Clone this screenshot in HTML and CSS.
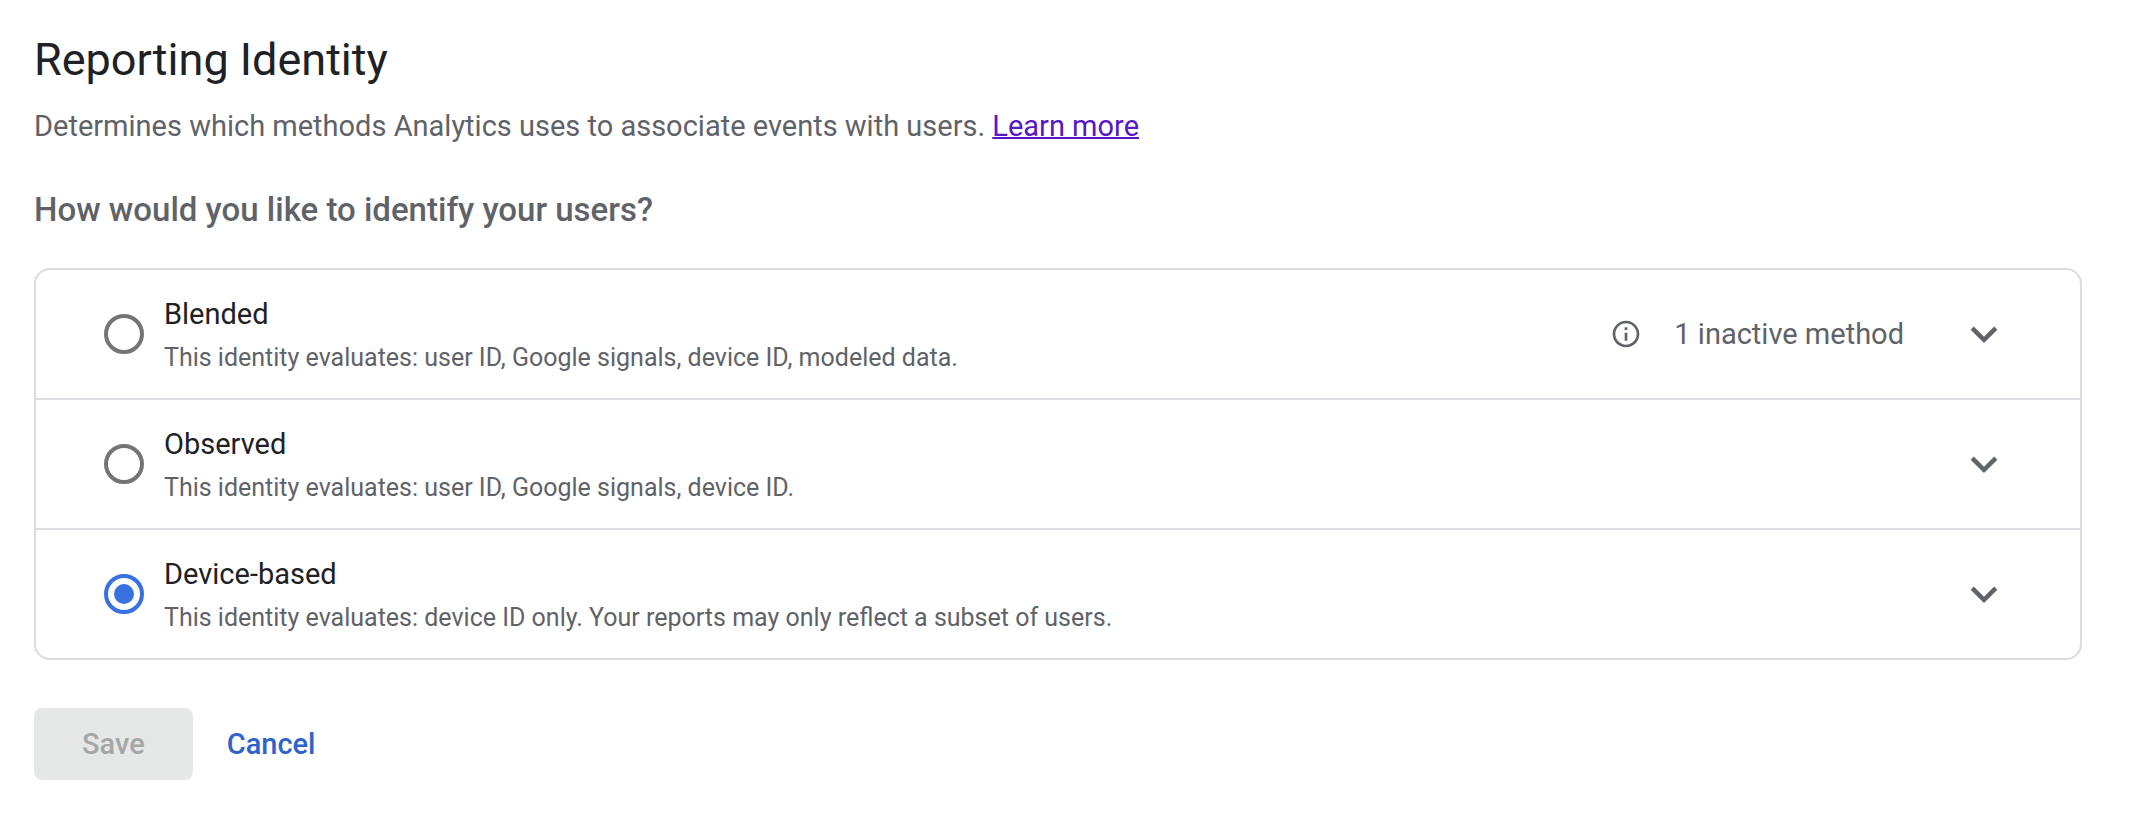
FILE: index.html
```
<!DOCTYPE html>
<html lang="en">
<head>
<meta charset="utf-8">
<meta name="viewport" content="width=device-width, initial-scale=1">
<title>Reporting Identity</title>
<link rel="stylesheet" href="styles.css">
</head>
<body>

<h1>Reporting Identity</h1>
<p class="intro">Determines which methods Analytics uses to associate events with users. <a href="#learn">Learn more</a></p>

<form>
    <h2 id="question">How would you like to identify your users?</h2>

    <div class="options" role="radiogroup" aria-labelledby="question">
        <div class="option">
            <input type="radio" name="identity" id="blended">
            <label for="blended">
                <span class="name">Blended</span>
                <span class="detail">This identity evaluates: user ID, Google signals, device ID, modeled data.</span>
            </label>
            <div class="status">
                <svg class="info" viewBox="0 0 24 24"><path d="M11 7h2v2h-2zm0 4h2v6h-2zm1-9C6.48 2 2 6.48 2 12s4.48 10 10 10 10-4.48 10-10S17.52 2 12 2zm0 18c-4.41 0-8-3.59-8-8s3.59-8 8-8 8 3.59 8 8-3.59 8-8 8z"/></svg>
                <span>1 inactive method</span>
            </div>
            <button type="button" class="expand" aria-label="Show Blended methods">
                <svg viewBox="0 0 24 24"><path d="M5.88 7.5L12 13.61l6.12-6.11L20 9.38l-8 8-8-8z"/></svg>
            </button>
        </div>

        <div class="option">
            <input type="radio" name="identity" id="observed">
            <label for="observed">
                <span class="name">Observed</span>
                <span class="detail">This identity evaluates: user ID, Google signals, device ID.</span>
            </label>
            <button type="button" class="expand" aria-label="Show Observed methods">
                <svg viewBox="0 0 24 24"><path d="M5.88 7.5L12 13.61l6.12-6.11L20 9.38l-8 8-8-8z"/></svg>
            </button>
        </div>

        <div class="option">
            <input type="radio" name="identity" id="device" checked>
            <label for="device">
                <span class="name">Device-based</span>
                <span class="detail">This identity evaluates: device ID only. Your reports may only reflect a subset of users.</span>
            </label>
            <button type="button" class="expand" aria-label="Show Device-based methods">
                <svg viewBox="0 0 24 24"><path d="M5.88 7.5L12 13.61l6.12-6.11L20 9.38l-8 8-8-8z"/></svg>
            </button>
        </div>
    </div>

    <div class="actions">
        <button type="submit" class="btn save" disabled>Save</button>
        <button type="button" class="btn cancel">Cancel</button>
    </div>
</form>

</body>
</html>
```
FILE: styles.css
```
* {
    box-sizing: border-box;
}

body {
    margin: 0;
    padding: 32px 65px 40px 34px;
    background: #fff;
    color: #5f6368;
    font-family: Roboto, Arial, sans-serif;
    font-size: 29px;
    line-height: 40px;
}

h1 {
    margin: 0 0 18px;
    color: #202124;
    font-size: 45px;
    font-weight: 400;
    line-height: 56px;
}

h2 {
    margin: 0 0 38px;
    font-size: 33px;
    font-weight: 500;
    line-height: 40px;
}

.intro {
    margin: 0 0 44px;
}

.intro a {
    color: #5816c4;
    text-decoration-thickness: 2px;
}

/* The list of identity choices */
.options {
    border: 2px solid #dadce0;
    border-radius: 16px;
}

.option {
    display: flex;
    align-items: center;
    padding: 0 76px 0 68px;
}

.option + .option {
    border-top: 2px solid #dadce0;
}

.option label {
    flex: 1;
    padding: 24px 0 20px 20px;
    cursor: pointer;
}

.name {
    display: block;
    margin-bottom: 4px;
    color: #202124;
}

.detail {
    display: block;
    font-size: 25px;
}

/* Radio button */
input[type="radio"] {
    appearance: none;
    display: grid;
    place-content: center;
    flex: none;
    width: 40px;
    height: 40px;
    margin: 0;
    border: 4px solid #757575;
    border-radius: 50%;
    cursor: pointer;
}

input[type="radio"]:checked {
    border-color: #3871e0;
}

input[type="radio"]:checked::before {
    content: "";
    width: 20px;
    height: 20px;
    border-radius: 50%;
    background: #3871e0;
}

.status {
    display: flex;
    align-items: center;
    gap: 32px;
    margin-right: 60px;
}

svg {
    display: block;
    fill: currentColor;
}

.info {
    width: 32px;
    height: 32px;
}

.expand {
    width: 40px;
    height: 40px;
    padding: 0;
    border: none;
    background: none;
    color: #5f6368;
    cursor: pointer;
}

/* Save and cancel */
.actions {
    display: flex;
    gap: 18px;
    margin-top: 48px;
}

.btn {
    height: 72px;
    border: none;
    border-radius: 8px;
    background: none;
    font-family: "Google Sans", Roboto, sans-serif;
    font-size: 29px;
    font-weight: 500;
    cursor: pointer;
}

.save {
    padding: 0 48px;
    background: #e6e8e7;
    color: #a5a7a6;
    cursor: default;
}

.cancel {
    padding: 0 16px;
    color: #2f62cc;
}
```
